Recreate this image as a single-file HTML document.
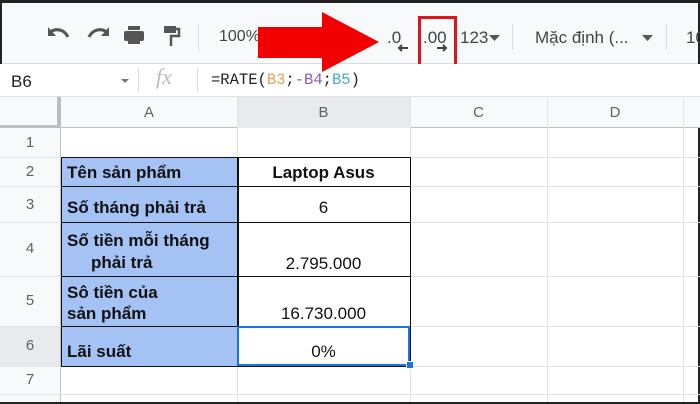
<!DOCTYPE html>
<html><head><meta charset="utf-8"><style>
*{margin:0;padding:0;box-sizing:border-box}
body{width:700px;height:404px;overflow:hidden;background:#fff;font-family:"Liberation Sans",Arial,sans-serif;position:relative}
.a{position:absolute}
.tb{left:0;top:0;width:700px;height:64px;background:#f8f9fa;border-bottom:1px solid #dadce0}
.fb{left:0;top:64px;width:700px;height:33px;background:#fff;border-bottom:1px solid #e0e0e0}
.t{color:#444;font-size:16px}
.hl{background:#f8f9fa;color:#5f6368;font-size:15px;text-align:center}
.vl{width:1px;background:#e2e3e3}
.hlz{height:1px;background:#e2e3e3}
.cell{font-size:17px;font-weight:bold;color:#111}
</style></head><body>
<div class="a tb"></div>
<div class="a" style="left:0;top:0;width:700px;height:3px;background:#222"></div>
<div class="a" style="left:0;top:0;width:2px;height:404px;background:#222"></div>
<div class="a" style="left:698px;top:0;width:2px;height:404px;background:#222"></div>
<div class="a" style="left:0;top:402px;width:700px;height:2px;background:#222"></div>
<!-- toolbar icons -->
<svg class="a" style="left:45px;top:24px" width="150" height="26" viewBox="0 0 150 26">
<path d="M5 8 C11 4 19 5 23 13" stroke="#555" stroke-width="3" fill="none"/><path d="M3 3 L3 12 L11 12 Z" fill="#555"/>
<path d="M62 8 C56 4 48 5 44 13" stroke="#555" stroke-width="3" fill="none"/><path d="M64 3 L64 12 L56 12 Z" fill="#555"/>
<rect x="83" y="2" width="12" height="4" fill="#555"/><rect x="79" y="7" width="20" height="10" rx="2" fill="#555"/><rect x="83" y="14" width="12" height="6" fill="#555"/>
<rect x="119" y="2" width="12" height="7" fill="#555"/><path d="M131 5 h3 v7 h-8 v10" stroke="#555" stroke-width="2.5" fill="none"/>
</svg>
<div class="a" style="left:198px;top:24px;width:1px;height:26px;background:#ddd"></div>
<div class="a t" style="left:219px;top:28px">100%</div>
<div class="a t" style="left:387px;top:28px;font-size:17px">.0</div>
<svg class="a" style="left:397px;top:44px" width="12" height="8"><path d="M11 4H3M5 1L2 4L5 7" stroke="#444" stroke-width="2" fill="none"/></svg>
<div class="a t" style="left:423px;top:28px;font-size:17px">.00</div>
<svg class="a" style="left:436px;top:44px" width="12" height="8"><path d="M1 4H9M7 1L10 4L7 7" stroke="#444" stroke-width="2" fill="none"/></svg>
<div class="a t" style="left:460px;top:28px;font-size:17px">123</div>
<svg class="a" style="left:489px;top:35px" width="12" height="8"><path d="M0 0h11l-5.5 6z" fill="#555"/></svg>
<div class="a" style="left:512px;top:24px;width:1px;height:26px;background:#ddd"></div>
<div class="a t" style="left:535px;top:28px;font-size:17px">Mặc định (...</div>
<svg class="a" style="left:642px;top:35px" width="12" height="8"><path d="M0 0h11l-5.5 6z" fill="#555"/></svg>
<div class="a" style="left:666px;top:24px;width:1px;height:26px;background:#ddd"></div>
<div class="a t" style="left:686px;top:28px;font-size:17px">10</div>
<div class="a" style="left:418px;top:16px;width:39px;height:54px;border:3px solid #e0141b"></div>
<!-- formula bar -->
<div class="a fb"></div>
<div class="a" style="left:11px;top:72px;font-size:17px;color:#222">B6</div>
<svg class="a" style="left:121px;top:79px" width="9" height="6"><path d="M0 0h8l-4 4z" fill="#777"/></svg>
<div class="a" style="left:138px;top:68px;width:1px;height:24px;background:#ddd"></div>
<div class="a" style="left:156px;top:64px;font-family:'Liberation Serif',serif;font-style:italic;font-size:22px;color:#bbb">fx</div>
<div class="a" style="left:197px;top:68px;width:1px;height:24px;background:#ddd"></div>
<div class="a" style="left:211px;top:71px;font-family:'Liberation Mono',monospace;font-size:15.5px;color:#222">=RATE(<span style="color:#e8a04d">B3</span>;<span style="color:#8a5fb0">-B4</span>;<span style="color:#4aa8c8">B5</span>)</div>
<!-- arrow -->
<svg class="a" style="left:255px;top:10px" width="130" height="64"><path d="M3 17 H67 V2 L124 32 L67 62 V48 H3 Z" fill="#f20000"/></svg>
<!-- headers -->
<div class="a hl" style="left:0;top:97px;width:700px;height:31px;border-bottom:1px solid #c0c0c0"></div>
<div class="a" style="left:237px;top:97px;width:173px;height:31px;background:#e8eaed"></div>
<div class="a hl" style="left:61px;top:104px;width:176px;background:none">A</div>
<div class="a hl" style="left:237px;top:104px;width:173px;background:none">B</div>
<div class="a hl" style="left:410px;top:104px;width:137px;background:none">C</div>
<div class="a hl" style="left:547px;top:104px;width:136px;background:none">D</div>
<div class="a hl" style="left:0;top:128px;width:60px;height:274px"></div>
<div class="a" style="left:0;top:326px;width:60px;height:40px;background:#e8eaed"></div>
<div class="a" style="left:57px;top:97px;width:4px;height:31px;background:#bdbdbd"></div>
<div class="a" style="left:0;top:125px;width:61px;height:3px;background:#bdbdbd"></div>
<div class="a vl" style="left:60px;top:128px;height:274px;background:#c0c0c0"></div>
<div class="a vl" style="left:237px;top:97px;height:305px"></div>
<div class="a vl" style="left:410px;top:97px;height:305px"></div>
<div class="a vl" style="left:547px;top:97px;height:305px"></div>
<div class="a vl" style="left:683px;top:97px;height:305px"></div>
<div class="a hlz" style="left:0;top:157px;width:700px"></div>
<div class="a hlz" style="left:0;top:186px;width:700px"></div>
<div class="a hlz" style="left:0;top:222px;width:700px"></div>
<div class="a hlz" style="left:0;top:276px;width:700px"></div>
<div class="a hlz" style="left:0;top:326px;width:700px"></div>
<div class="a hlz" style="left:0;top:366px;width:700px"></div>
<div class="a hlz" style="left:0;top:394px;width:700px"></div>
<div class="a hl" style="left:0;top:134px;width:60px;background:none">1</div>
<div class="a hl" style="left:0;top:163px;width:60px;background:none">2</div>
<div class="a hl" style="left:0;top:196px;width:60px;background:none">3</div>
<div class="a hl" style="left:0;top:240px;width:60px;background:none">4</div>
<div class="a hl" style="left:0;top:292px;width:60px;background:none">5</div>
<div class="a hl" style="left:0;top:337px;width:60px;background:none">6</div>
<div class="a hl" style="left:0;top:371px;width:60px;background:none">7</div>
<!-- table -->
<div class="a" style="left:61px;top:157px;width:176px;height:209px;background:#a4c2f4"></div>
<div class="a" style="left:61px;top:157px;width:350px;height:210px;border:1.5px solid #111"></div>
<div class="a" style="left:237px;top:157px;width:1.5px;height:209px;background:#111"></div>
<div class="a" style="left:61px;top:186px;width:350px;height:1px;background:#111"></div>
<div class="a" style="left:61px;top:222px;width:350px;height:1px;background:#111"></div>
<div class="a" style="left:61px;top:276px;width:350px;height:1px;background:#111"></div>
<div class="a" style="left:61px;top:326px;width:350px;height:1px;background:#111"></div>
<div class="a" style="left:237px;top:326px;width:173px;height:40px;border:2px solid #1a73e8"></div>
<div class="a" style="left:406px;top:361px;width:8px;height:8px;background:#1a73e8;border:1px solid #fff"></div>
<div class="a cell" style="left:67px;top:163px">Tên sản phẩm</div>
<div class="a cell" style="left:237px;top:163px;width:173px;text-align:center">Laptop Asus</div>
<div class="a cell" style="left:67px;top:198px">Số tháng phải trả</div>
<div class="a cell" style="left:237px;top:198px;width:173px;text-align:center;font-weight:normal">6</div>
<div class="a cell" style="left:67px;top:231px">Số tiền mỗi tháng</div>
<div class="a cell" style="left:91px;top:253px">phải trả</div>
<div class="a cell" style="left:237px;top:254px;width:173px;text-align:center;font-weight:normal">2.795.000</div>
<div class="a cell" style="left:67px;top:283px">Sô tiền của</div>
<div class="a cell" style="left:67px;top:304px">sản phẩm</div>
<div class="a cell" style="left:237px;top:304px;width:173px;text-align:center;font-weight:normal">16.730.000</div>
<div class="a cell" style="left:67px;top:342px">Lãi suất</div>
<div class="a cell" style="left:237px;top:342px;width:173px;text-align:center;font-weight:normal">0%</div>
</body></html>
